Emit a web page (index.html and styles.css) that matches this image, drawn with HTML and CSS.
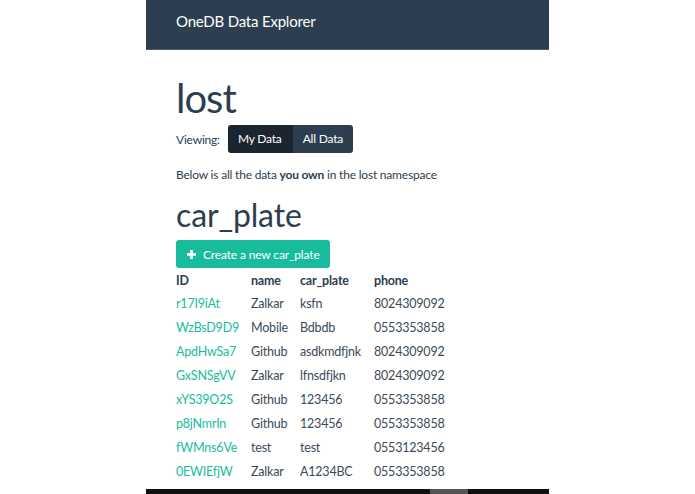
FILE: index.html
```html
<!DOCTYPE html>
<html>
<head>
<meta charset="utf-8">
<link rel="stylesheet" href="styles.css">
</head>
<body>
<div class="page">
  <header class="navbar"><span class="brand">OneDB Data Explorer</span></header>
  <main class="content">
    <h1 class="title">lost</h1>
    <div class="viewing">
      <span class="viewing-label">Viewing:</span>
      <div class="btn-group">
        <span class="seg seg-active">My Data</span>
        <span class="seg">All Data</span>
      </div>
    </div>
    <p class="intro">Below is all the data <b>you own</b> in the lost namespace</p>
    <h2 class="subtitle">car_plate</h2>
    <button class="btn-create"><svg class="plus" viewBox="0 0 10 10" width="9" height="9"><path d="M3.5 0h3v3.5H10v3H6.5V10h-3V6.5H0v-3h3.5z" fill="#fff"/></svg>Create a new car_plate</button>
    <table class="data">
      <colgroup><col class="c-id"><col class="c-name"><col class="c-plate"><col class="c-phone"></colgroup>
      <thead>
        <tr><th>ID</th><th>name</th><th>car_plate</th><th>phone</th></tr>
      </thead>
      <tbody>
        <tr><td><a>r17I9iAt</a></td><td>Zalkar</td><td>ksfn</td><td>8024309092</td></tr>
        <tr><td><a>WzBsD9D9</a></td><td>Mobile</td><td>Bdbdb</td><td>0553353858</td></tr>
        <tr><td><a>ApdHwSa7</a></td><td>Github</td><td>asdkmdfjnk</td><td>8024309092</td></tr>
        <tr><td><a>GxSNSgVV</a></td><td>Zalkar</td><td>lfnsdfjkn</td><td>8024309092</td></tr>
        <tr><td><a>xYS39O2S</a></td><td>Github</td><td>123456</td><td>0553353858</td></tr>
        <tr><td><a>p8jNmrIn</a></td><td>Github</td><td>123456</td><td>0553353858</td></tr>
        <tr><td><a>fWMns6Ve</a></td><td>test</td><td>test</td><td>0553123456</td></tr>
        <tr><td><a>0EWIEfjW</a></td><td>Zalkar</td><td>A1234BC</td><td>0553353858</td></tr>
      </tbody>
    </table>
  </main>
  <div class="hscroll"><div class="thumb"></div></div>
</div>
</body>
</html>
```
FILE: styles.css
```css
html, body {
  margin: 0;
  padding: 0;
  background: #fff;
}
body {
  font-family: Lato, "Open Sans", sans-serif;
  color: #2c3e50;
  font-size: 12px;
  letter-spacing: -0.2px;
}
.page {
  width: 403px;
  height: 494px;
  margin: 0 auto;
  display: flex;
  flex-direction: column;
  overflow: hidden;
}
.navbar {
  height: 49px;
  background: #2c3e50;
  border-bottom: 1px solid #4a5a6a;
  display: flex;
  align-items: center;
  padding-left: 30px;
  flex-shrink: 0;
}
.brand {
  color: #fff;
  font-size: 15px;
  letter-spacing: -0.2px;
  margin-top: -7px;
}
.content {
  flex: 1;
  padding: 0 30px;
}
.title {
  font-size: 40px;
  letter-spacing: -1px;
  font-weight: 400;
  margin: 22px 0 0;
  line-height: 52px;
  color: #2c3e50;
}
.viewing {
  display: flex;
  align-items: center;
  gap: 8px;
  margin-top: 1px;
}
.btn-group {
  display: flex;
  border-radius: 3px;
  overflow: hidden;
}
.seg {
  background: #2c3e50;
  color: #fff;
  height: 28px;
  line-height: 28px;
  padding: 0 10px;
}
.seg-active {
  background: #1a252f;
  padding: 0 11px 0 10px;
}
.intro {
  margin: 13px 0 0;
  line-height: 18px;
}
.intro b {
  font-weight: 700;
}
.subtitle {
  font-size: 32px;
  letter-spacing: -0.15px;
  font-weight: 400;
  margin: 11px 0 0;
  line-height: 40px;
}
.btn-create {
  display: flex;
  align-items: center;
  gap: 7px;
  background: #18bc9c;
  color: #fff;
  border: none;
  border-radius: 3px;
  height: 28px;
  padding: 0 10px 0 11px;
  font-family: inherit;
  font-size: 12px;
  letter-spacing: -0.15px;
  margin-top: 5px;
}
.data {
  border-collapse: collapse;
  table-layout: fixed;
  margin-top: 2px;
  font-size: 12.5px;
}
.c-id { width: 75px; }
.c-name { width: 49px; }
.c-plate { width: 74px; }
.c-phone { width: 80px; }
.data th, .data td {
  text-align: left;
  padding: 0;
  white-space: nowrap;
}
.data th {
  font-weight: 700;
  height: 21px;
}
.data td {
  font-weight: 400;
  height: 24px;
  color: #3b4a58;
}
.data a {
  color: #18bc9c;
}
.hscroll {
  height: 5px;
  background: #111;
  flex-shrink: 0;
  display: flex;
  padding-left: 284px;
}
.thumb {
  width: 38px;
  background: #555;
}
```
